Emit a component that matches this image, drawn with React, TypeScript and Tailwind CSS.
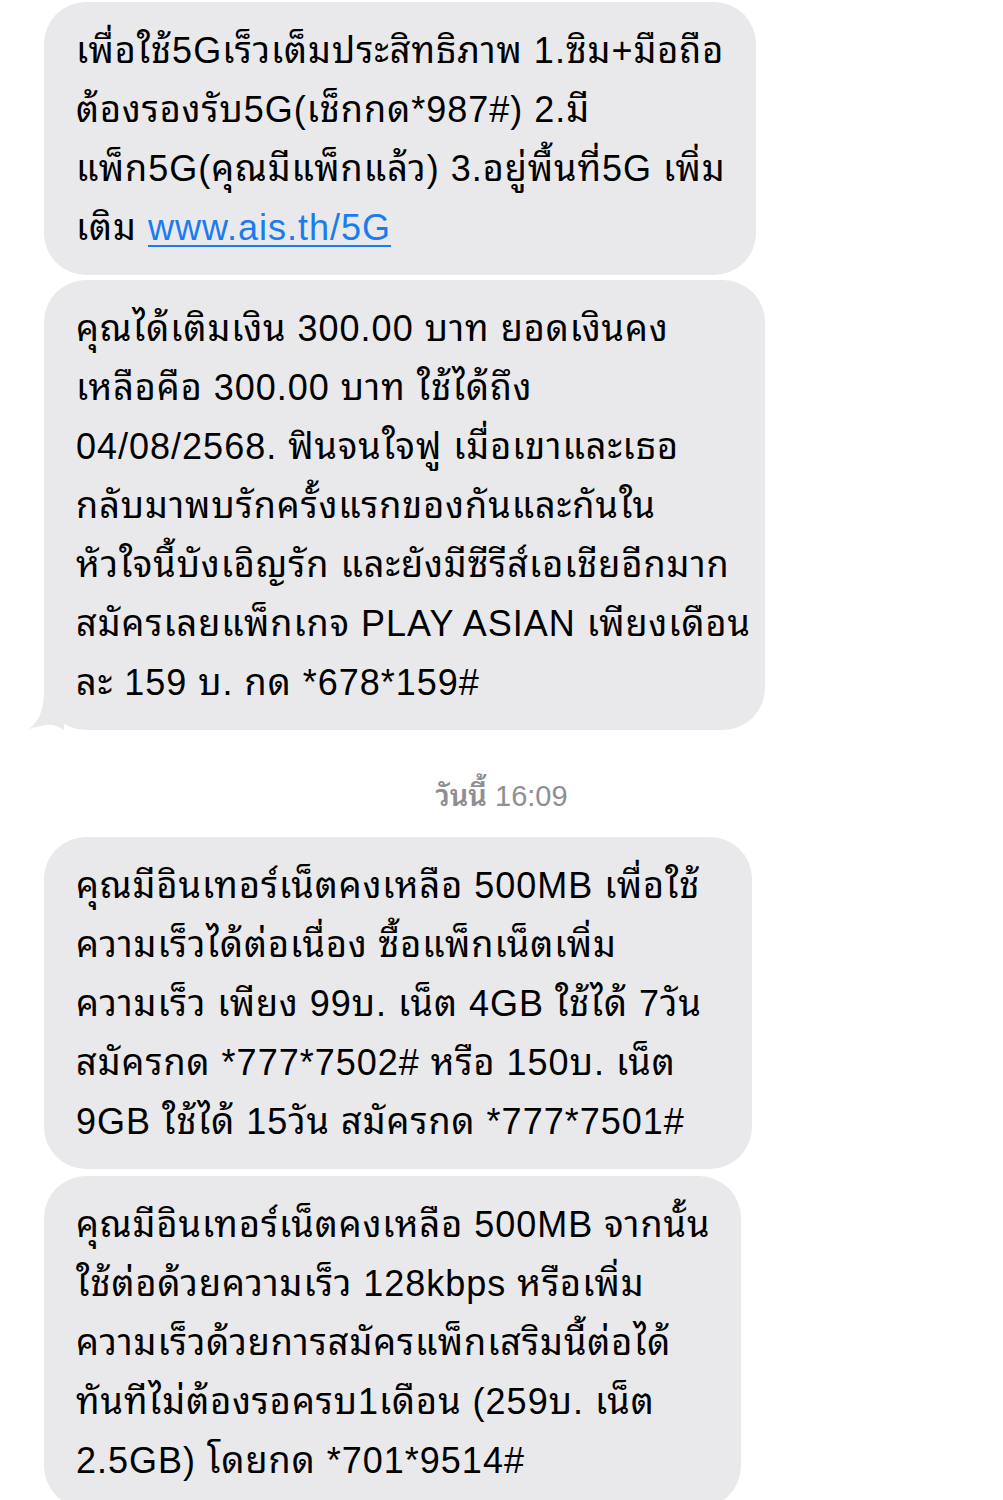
import React from 'react';

const FONT = "font-['Liberation_Sans','Noto_Sans_Thai_Looped','Loma','Garuda','Tlwg_Typo','Noto_Sans_Thai',sans-serif]";

type Bubble = {
  width: string;
  lines: React.ReactNode[];
  tail?: boolean;
};

function MessageBubble({ width, lines, tail }: Bubble) {
  return (
    <div className={`relative ${width} rounded-[42px] bg-[#e9e9eb] pl-[32px] pr-[20px] pt-[19px] pb-[18px]`}>
      {lines.map((line, i) => (
        <div key={i} className="h-[59px] whitespace-nowrap text-[36px] leading-[59px] tracking-[1px] text-black">
          {line}
        </div>
      ))}
      {tail ? (
        <svg
          className="absolute bottom-0 left-[-16px]"
          width="40"
          height="40"
          viewBox="0 0 40 40"
        >
          <path d="M16 0 L36 0 L36 40 C30 36 24 34 18 35 C8 37 2 38 0 40 C10 32 16 22 16 0 Z" fill="#e9e9eb" />
        </svg>
      ) : null}
    </div>
  );
}

function App() {
  return (
    <div className={`h-[1500px] w-[1003px] overflow-hidden bg-white ${FONT}`}>
      <div className="flex flex-col gap-[5px] pl-[44px] pt-[2px]">
        <MessageBubble
          width="w-[712px]"
          lines={[
            'เพื่อใช้5Gเร็วเต็มประสิทธิภาพ 1.ซิม+มือถือ',
            'ต้องรองรับ5G(เช็กกด*987#) 2.มี',
            'แพ็ก5G(คุณมีแพ็กแล้ว) 3.อยู่พื้นที่5G เพิ่ม',
            <>
              เติม{' '}
              <span className="text-[#1a7cf0] underline decoration-[2px] underline-offset-[5px]">www.ais.th/5G</span>
            </>
          ]}
        />
        <MessageBubble
          width="w-[721px]"
          tail
          lines={[
            'คุณได้เติมเงิน 300.00 บาท ยอดเงินคง',
            'เหลือคือ 300.00 บาท ใช้ได้ถึง',
            '04/08/2568. ฟินจนใจฟู เมื่อเขาและเธอ',
            'กลับมาพบรักครั้งแรกของกันและกันใน',
            'หัวใจนี้บังเอิญรัก และยังมีซีรีส์เอเชียอีกมาก',
            'สมัครเลยแพ็กเกจ PLAY ASIAN เพียงเดือน',
            'ละ 159 บ. กด *678*159#'
          ]}
        />
      </div>

      <div className="flex h-[107px] items-center justify-center pt-[26px] text-[29px] text-[#8e8e93]">
        <span className="font-semibold">วันนี้</span>
        <span className="ml-[8px]">16:09</span>
      </div>

      <div className="flex flex-col gap-[7px] pl-[44px]">
        <MessageBubble
          width="w-[708px]"
          lines={[
            'คุณมีอินเทอร์เน็ตคงเหลือ 500MB เพื่อใช้',
            'ความเร็วได้ต่อเนื่อง ซื้อแพ็กเน็ตเพิ่ม',
            'ความเร็ว เพียง 99บ. เน็ต 4GB ใช้ได้ 7วัน',
            'สมัครกด *777*7502# หรือ 150บ. เน็ต',
            '9GB ใช้ได้ 15วัน สมัครกด *777*7501#'
          ]}
        />
        <MessageBubble
          width="w-[697px]"
          lines={[
            'คุณมีอินเทอร์เน็ตคงเหลือ 500MB จากนั้น',
            'ใช้ต่อด้วยความเร็ว 128kbps หรือเพิ่ม',
            'ความเร็วด้วยการสมัครแพ็กเสริมนี้ต่อได้',
            'ทันทีไม่ต้องรอครบ1เดือน (259บ. เน็ต',
            '2.5GB) โดยกด *701*9514#'
          ]}
        />
      </div>
    </div>
  );
}

export default App;
